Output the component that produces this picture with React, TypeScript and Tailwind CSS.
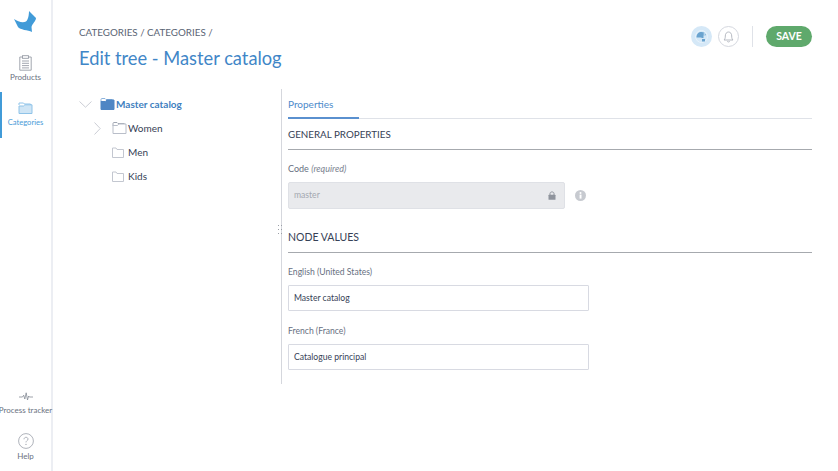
const Folder = ({ filled, stack }: { filled?: boolean; stack?: boolean }) => (
  <svg width="15" height="14" viewBox="0 0 15 14" fill="none" className="shrink-0">
    {stack && <path d="M1 5V2.5C1 1.9 1.4 1.5 2 1.5H5L6 2.5H12.5" stroke="#a1a7b3" strokeWidth="1" />}
    {filled && <path d="M1 5V2.5C1 1.9 1.4 1.5 2 1.5H5L6 2.5H12.5" stroke="#8db3dc" strokeWidth="1" />}
    <path
      d="M1 12.5V4.5H5.5L6.8 3H14V12.5H1Z"
      fill={filled ? "#4f86c4" : "#fff"}
      stroke={filled ? "#4f86c4" : "#b9bec9"}
      strokeWidth="1"
    />
  </svg>
);

const SmallFolder = () => (
  <svg width="12" height="11" viewBox="0 0 12 11" fill="none" className="shrink-0">
    <path d="M.5 10.5V1H4L5 2.5H11.5V10.5H.5Z" fill="#fff" stroke="#c3c7d0" strokeWidth="1" />
  </svg>
);

const Section = ({ children, size }: { children: string; size: string }) => (
  <div className={`h-[24px] border-b border-[#a6a9ae] leading-[17px] text-[#364156] ${size}`}>{children}</div>
);

const Label = ({ children, size }: { children: React.ReactNode; size: string }) => (
  <div className={`leading-[12px] text-[#67707f] ${size}`}>{children}</div>
);

const TextField = ({ value }: { value: string }) => (
  <div className="mt-[7px] flex h-[26px] w-[301px] items-center rounded-[1px] border border-[#d8dae2] bg-white px-[5px] text-[8.6px] text-[#364156]">
    {value}
  </div>
);

export default function App() {
  return (
    <div className="flex h-[471px] w-[838px] overflow-hidden bg-white font-['Lato','Noto_Sans',sans-serif]">
      <aside className="flex h-full w-[53px] shrink-0 flex-col border-r-2 border-[#eceef3] bg-white">
        <div className="flex h-[46px] items-start pl-[14px] pt-[11px]">
          <svg width="23" height="22" viewBox="0 0 23 22">
            <path d="M0 8C4 11 9 12 12 10.5C14 9 15 4 15 0L22 7C22 10 18 13 17.5 16L18 21C14 19 6 19 4 16Z" fill="#419bd8" />
          </svg>
        </div>
        <div className="flex h-[46px] flex-col items-center pt-[9px] text-[#6a7280]">
          <svg width="13" height="16" viewBox="0 0 13 16" fill="none" stroke="#989da7" strokeWidth="0.9">
            <path d="M3.5 2H.8V15.2H12.2V2H9.5" />
            <rect x="3.5" y=".7" width="6" height="2.6" />
            <path d="M3 6H10M3 8.3H10M3 10.6H10M3 12.9H10" />
          </svg>
          <span className="mt-[1px] text-[8px] leading-[11px]">Products</span>
        </div>
        <div className="flex h-[46px] flex-col items-center border-l-2 border-[#419bd8] pr-[2px] pt-[9px] text-[#4a9bd8]">
          <svg width="15" height="14" viewBox="0 0 15 14" fill="none">
            <path d="M1 4V2H5.5L6.5 3H12.5V4" stroke="#8fc3e8" strokeWidth="1" />
            <path d="M1 12.5V5H5.5L6.8 3.8H14V12.5H1Z" fill="#cfe5f5" stroke="#8fc3e8" strokeWidth="1" />
          </svg>
          <span className="mt-[2px] text-[7.6px] leading-[11px]">Categories</span>
        </div>
        <div className="flex-1" />
        <div className="flex flex-col items-center text-[#6a7280]">
          <svg width="14" height="9" viewBox="0 0 14 9" fill="none" stroke="#858b96" strokeWidth="0.8">
            <path d="M0 5H3.5L4.7 3.2L5.8 7L7.2 .8L8.5 8L9.6 4L10.3 5H14" />
          </svg>
          <span className="mt-[4px] whitespace-nowrap text-[8px] leading-[11px]">Process tracker</span>
        </div>
        <div className="mb-[9px] mt-[17px] flex flex-col items-center text-[#6a7280]">
          <svg width="16" height="16" viewBox="0 0 16 16" fill="none">
            <circle cx="8" cy="8" r="7.4" stroke="#9ba0aa" strokeWidth="0.8" />
            <path d="M6 6.3C6 5 7 4.3 8 4.3C9.2 4.3 10 5.1 10 6.1C10 7.6 8 7.6 8 9.4" stroke="#9ba0aa" strokeWidth="0.8" />
            <circle cx="8" cy="11.4" r="0.6" fill="#9ba0aa" />
          </svg>
          <span className="mt-[2px] text-[8px] leading-[11px]">Help</span>
        </div>
      </aside>

      <main className="flex min-w-0 flex-1 flex-col pl-[26px] pr-[26px]">
        <header className="flex h-[89px] shrink-0 items-start justify-between">
          <div className="pt-[26px]">
            <div className="text-[9.8px] leading-[13px] text-[#5a6474]">CATEGORIES / CATEGORIES /</div>
            <h1 className="mt-[7px] text-[18.3px] font-normal leading-[24px] text-[#3f86c7]">Edit tree - Master catalog</h1>
          </div>
          <div className="flex items-center pt-[26px]">
            <div className="flex h-[21px] w-[21px] items-center justify-center rounded-full bg-[#d5e8f7]">
              <svg width="15" height="15" viewBox="0 0 15 15">
                <circle cx="7.5" cy="7.5" r="6" fill="none" stroke="#e9f3fb" strokeWidth="1" />
                <path d="M2.5 8.5C2.5 5 4.5 3 7.5 3C9.8 3 11.5 4.2 12 6.3H9.5V9H7.5V8.5H2.5Z" fill="#6aa3cf" />
                <circle cx="10.3" cy="5" r="0.8" fill="#e9f3fb" />
                <rect x="8" y="10" width="3" height="2.5" fill="#6aa3cf" />
              </svg>
            </div>
            <div className="ml-[6px] flex h-[21px] w-[21px] items-center justify-center rounded-full border border-[#d5d8df] bg-white">
              <svg width="11" height="12" viewBox="0 0 11 12" fill="none" stroke="#a3a8b2" strokeWidth="0.8">
                <path d="M1 9C2 8 2.3 7 2.3 5C2.3 2.8 3.5 1 5.5 1C7.5 1 8.7 2.8 8.7 5C8.7 7 9 8 10 9H1Z" />
                <path d="M4.2 10.2C4.6 11.2 6.4 11.2 6.8 10.2" />
              </svg>
            </div>
            <div className="ml-[13px] h-[21px] w-px bg-[#dfe2e8]" />
            <div className="ml-[13px] flex h-[21px] w-[46px] items-center justify-center rounded-full bg-[#5fa96c] text-[10.5px] font-bold text-white">SAVE</div>
          </div>
        </header>

        <div className="flex">
          <section className="h-[295px] w-[202px] shrink-0 pt-[7px] text-[10px]">
            <div className="flex h-[16px] items-center">
              <svg width="13" height="7" viewBox="0 0 13 7" fill="none" stroke="#c5c8d0" strokeWidth="0.9">
                <path d="M.5 .5L6.5 6.2L12.5 .5" />
              </svg>
              <span className="ml-[8px]"><Folder filled /></span>
              <span className="ml-[1px] font-bold text-[#3f7fc0]">Master catalog</span>
            </div>
            <div className="mt-[8px] flex h-[16px] items-center">
              <svg width="7" height="13" viewBox="0 0 7 13" fill="none" stroke="#c5c8d0" strokeWidth="0.9" className="ml-[15px]">
                <path d="M.5 .5L6.2 6.5L.5 12.5" />
              </svg>
              <span className="ml-[11px]"><Folder stack /></span>
              <span className="ml-[1px] text-[#364156]">Women</span>
            </div>
            <div className="mt-[8px] flex h-[16px] items-center pl-[33px] text-[#364156]">
              <SmallFolder />
              <span className="ml-[4px]">Men</span>
            </div>
            <div className="mt-[8px] flex h-[16px] items-center pl-[33px] text-[#364156]">
              <SmallFolder />
              <span className="ml-[4px]">Kids</span>
            </div>
          </section>

          <section className="relative min-w-0 flex-1 border-l border-[#d5d7dd] pl-[6px]">
            <div className="absolute left-[-4px] top-[136px] grid h-[9px] w-[4px] grid-cols-2 content-between gap-x-px">
              {Array.from({ length: 6 }).map((_, i) => (
                <span key={i} className="h-px w-px bg-[#9a9ea6]" />
              ))}
            </div>
            <div className="h-[30px] border-b border-[#dfe2e8]">
              <div className="inline-block h-[30px] w-[71px] border-b-2 border-[#5a90cf] text-[10px] leading-[31px] text-[#4d8aca]">Properties</div>
            </div>
            <div className="mt-[7px]"><Section size="text-[9.8px]">GENERAL PROPERTIES</Section></div>
            <div className="mt-[13px]">
              <Label size="text-[9px]">Code <em className="text-[#7b8390]">(required)</em></Label>
            </div>
            <div className="mt-[7px] flex items-center">
              <div className="flex h-[27px] w-[277px] items-center justify-between rounded-[2px] border border-[#dfe1e6] bg-[#e9eaed] pl-[5px] pr-[8px] text-[8.6px] text-[#a3a8b0]">
                <span>master</span>
                <svg width="8" height="9" viewBox="0 0 8 9" fill="#8f949d">
                  <rect x="0.5" y="3.8" width="7" height="5" rx="0.5" />
                  <path d="M2 4V2.5C2 .4 6 .4 6 2.5V4" fill="none" stroke="#8f949d" strokeWidth="1" />
                </svg>
              </div>
              <svg width="11" height="11" viewBox="0 0 11 11" className="ml-[10px]">
                <circle cx="5.5" cy="5.5" r="5.5" fill="#c7cad0" />
                <rect x="4.6" y="4.6" width="1.9" height="4" fill="#fff" />
                <circle cx="5.5" cy="3" r="1" fill="#fff" />
              </svg>
            </div>
            <div className="mt-[20px]"><Section size="text-[10.5px]">NODE VALUES</Section></div>
            <div className="mt-[13px]"><Label size="text-[8.6px]">English (United States)</Label></div>
            <TextField value="Master catalog" />
            <div className="mt-[14px]"><Label size="text-[8.6px]">French (France)</Label></div>
            <TextField value="Catalogue principal" />
          </section>
        </div>
      </main>
    </div>
  );
}
